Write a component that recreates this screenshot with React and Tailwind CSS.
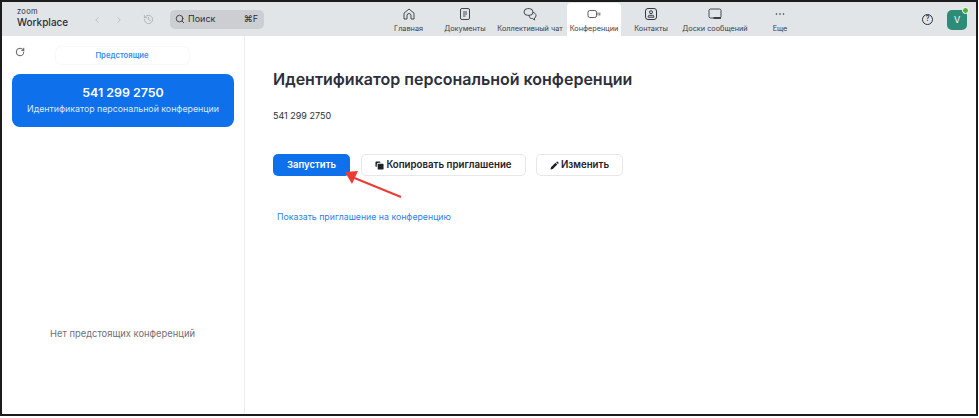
import React from 'react';
import { ChevronLeft, ChevronRight, Search, RotateCw, History } from 'lucide-react';

const iconCls = 'w-[14px] h-[14px] text-[#34363d]';

const HomeIcon = () => (
  <svg viewBox="0 0 14 14" fill="none" stroke="currentColor" strokeWidth="0.9" className={iconCls}>
    <path d="M2 6.200 7 2l5 4.200V12H9V8.500a2 2 0 0 0-4 0V12H2z" strokeLinejoin="round" />
  </svg>
);
const DocIcon = () => (
  <svg viewBox="0 0 14 14" fill="none" stroke="currentColor" strokeWidth="0.9" className={iconCls}>
    <rect x="2.500" y="1.500" width="9" height="11" rx="1.500" />
    <path d="M5 5h4M5 7h4M5 9h2.500" />
  </svg>
);
const ChatIcon = () => (
  <svg viewBox="0 0 14 14" fill="none" stroke="currentColor" strokeWidth="0.9" className={iconCls}>
    <path d="M1 5a3.600 3.600 0 0 1 3.600-3.400h1.800A3.600 3.600 0 0 1 10 5a3.400 3.400 0 0 1-3.600 3.300H4.600A3.500 3.500 0 0 1 1 5z" />
    <path d="M10 5.500c2 .4 3 1.600 3 3 0 1.200-.6 2-1.500 2.600V13l-2-1.500H8.500c-1.200 0-2-.7-2.400-3.200" strokeLinejoin="round" />
  </svg>
);
const VideoIcon = () => (
  <svg viewBox="0 0 14 14" fill="none" stroke="currentColor" strokeWidth="0.8" className={iconCls}>
    <rect x="1" y="3.500" width="8.500" height="7" rx="1.800" />
    <path d="M11 5.500v3M12.800 5.500v3" />
  </svg>
);
const ContactIcon = () => (
  <svg viewBox="0 0 14 14" fill="none" stroke="currentColor" strokeWidth="1" className={iconCls}>
    <rect x="1.500" y="1.500" width="11" height="11" rx="2.500" />
    <circle cx="7" cy="5.200" r="1.500" />
    <path d="M4.200 10.200h5.600V9.500a1.200 1.200 0 0 0-1.200-1.200H5.400a1.200 1.200 0 0 0-1.200 1.200z" />
  </svg>
);
const BoardIcon = () => (
  <svg viewBox="0 0 14 14" fill="none" stroke="currentColor" strokeWidth="0.9" className={iconCls}>
    <rect x="1" y="2" width="12" height="9" rx="1.500" />
    <path d="M5.500 11h7.500" strokeWidth="1.800" />
  </svg>
);
const DotsIcon = () => (
  <svg viewBox="0 0 14 14" fill="currentColor" className={iconCls}>
    <circle cx="3.500" cy="7" r="0.800" />
    <circle cx="7" cy="7" r="0.800" />
    <circle cx="10.500" cy="7" r="0.800" />
  </svg>
);

const tabs = [
  { label: 'Главная', icon: HomeIcon, width: 'w-[57px]' },
  { label: 'Документы', icon: DocIcon, width: 'w-[56px]' },
  { label: 'Коллективный чат', icon: ChatIcon, width: 'w-[74px]' },
  { label: 'Конференции', icon: VideoIcon, width: 'w-[54px]', active: true },
  { label: 'Контакты', icon: ContactIcon, width: 'w-[60px]' },
  { label: 'Доски сообщений', icon: BoardIcon, width: 'w-[68px]' },
  { label: 'Еще', icon: DotsIcon, width: 'w-[62px]' },
];

export default function App() {
  return (
    <div className="w-[979px] h-[418px] bg-white font-['Inter',sans-serif] overflow-hidden">
      <div className="relative w-[978px] h-[416px] border-2 border-[#1c1c1c] flex flex-col bg-white">
        {/* top bar */}
        <header className="h-[34px] pt-[1px] shrink-0 bg-[#e2e5e8] flex items-stretch">
          <div className="w-[51px] ml-[15px] pt-[5px] text-[#2d2f36]">
            <div className="text-[7.500px] leading-[8px] tracking-[0.3px]">zoom</div>
            <div className="text-[10px] leading-[12px] font-medium">Workplace</div>
          </div>
          <div className="flex items-center gap-[12px] ml-[24px] text-[#b4b8bd]">
            <ChevronLeft className="w-[10px] h-[10px]" />
            <ChevronRight className="w-[10px] h-[10px]" />
          </div>
          <div className="flex items-center ml-[19px] text-[#aeb2b7]">
            <History className="w-[11px] h-[11px]" />
          </div>
          <div className="self-center flex items-center justify-between ml-[16px] mb-[1px] w-[94px] h-[19px] rounded-[5px] bg-[#ccced1] pl-[5px] pr-[6px] text-[#2d2f36]">
            <div className="flex items-center gap-[3px]">
              <Search className="w-[10px] h-[10px]" />
              <span className="text-[9px]">Поиск</span>
            </div>
            <span className="text-[9px]">⌘F</span>
          </div>
          <nav className="flex items-stretch ml-[116px]">
            {tabs.map((tab) => (
              <div
                key={tab.label}
                className={`${tab.width} flex flex-col items-center pt-[4px] rounded-t-[4px] whitespace-nowrap ${tab.active ? 'bg-white' : ''}`}
              >
                <tab.icon />
                <span className="mt-[3px] text-[7.300px] leading-[9px] text-[#3c3e45]">{tab.label}</span>
              </div>
            ))}
          </nav>
          <div className="ml-auto flex items-center gap-[14px] pr-[9px]">
            <div className="w-[11px] h-[11px] rounded-full border border-[#2d2f36] flex items-center justify-center text-[7px] font-medium text-[#2d2f36]">?</div>
            <div className="relative w-[20px] h-[20px] rounded-[5px] bg-[#2e8b78] flex items-center justify-center text-white text-[9px]">
              V
              <span className="absolute -top-[3px] -right-[2px] w-[7px] h-[7px] rounded-full bg-[#4caf3f] border border-white" />
            </div>
          </div>
        </header>

        <div className="flex-1 flex min-h-0">
          {/* left column */}
          <aside className="w-[243px] shrink-0 border-r border-[#eceef0] flex flex-col pl-[10px] pr-[9px] pt-[11px]">
            <div className="relative h-[17px] flex justify-center">
              <RotateCw className="absolute left-[3px] top-[0px] w-[10px] h-[10px] text-[#3c3e45]" />
              <div className="ml-[-3px] w-[133px] h-[17px] rounded-[5px] bg-white shadow-[0_0_2px_rgba(0,0,0,0.1)] flex items-center justify-center text-[7.700px] font-semibold text-[#3d8bf0]">
                Предстоящие
              </div>
            </div>
            <div className="mt-[10px] w-[222px] h-[53px] rounded-[8px] bg-[#0e71eb] flex flex-col items-center pt-[11px] text-white">
              <div className="text-[12.400px] leading-[15px] font-semibold">541 299 2750</div>
              <div className="mt-[3px] text-[8.800px] leading-[11px] text-[#dbe9fc]">Идентификатор персональной конференции</div>
            </div>
            <div className="mt-[201px] pr-[2px] text-center text-[9.400px] leading-[12px] text-[#6e7077]">Нет предстоящих конференций</div>
          </aside>

          {/* details */}
          <main className="flex-1 pl-[28px] pt-[33px]">
            <h1 className="text-[16px] leading-[20px] font-semibold text-[#2d2f3b]">Идентификатор персональной конференции</h1>
            <p className="mt-[21px] text-[9px] leading-[11px] text-[#2d2f36]">541 299 2750</p>
            <div className="mt-[33px] flex gap-[10px]">
              <button className="w-[77px] h-[22px] rounded-[5px] bg-[#0e71eb] text-white text-[9.500px] font-semibold">Запустить</button>
              <button className="ml-[1px] w-[165px] h-[22px] rounded-[5px] border border-[#e6e7e9] bg-white text-[#1f2026] text-[9.700px] font-semibold flex items-center justify-center gap-[2px]">
                <svg viewBox="0 0 10 10" fill="currentColor" className="w-[9px] h-[9px]">
                  <path d="M0.500 1.500A1 1 0 0 1 1.500 0.500h3.500a1 1 0 0 1 1 1V2H4a2 2 0 0 0-2 2v2.500h-.5a1 1 0 0 1-1-1z" />
                  <rect x="3" y="3" width="6.500" height="6.500" rx="1" />
                </svg>
                Копировать приглашение
              </button>
              <button className="w-[87px] h-[22px] rounded-[5px] border border-[#e6e7e9] bg-white text-[#1f2026] text-[9.700px] font-semibold flex items-center justify-center gap-[2px]">
                <svg viewBox="0 0 10 10" fill="currentColor" className="w-[9px] h-[9px]">
                  <path d="M0.500 9.500l.6-2.600 5-5 2 2-5 5zM6.800 1.300l.6-.6a.8.8 0 0 1 1.100 0l.9.9a.8.8 0 0 1 0 1.100l-.6.6z" />
                </svg>
                Изменить
              </button>
            </div>
            <a className="block mt-[36px] ml-[4px] text-[8.750px] leading-[11px] text-[#2d7fe8]">Показать приглашение на конференцию</a>
          </main>
        </div>

        {/* annotation arrow */}
        <svg className="absolute left-[340px] top-[168px] w-[64px] h-[32px]" viewBox="0 0 64 32" fill="none">
          <path d="M59 27 10 7" stroke="#ea3b35" strokeWidth="2" />
          <path d="M3 2 16 1 10 14z" fill="#ea3b35" />
        </svg>
      </div>
    </div>
  );
}
